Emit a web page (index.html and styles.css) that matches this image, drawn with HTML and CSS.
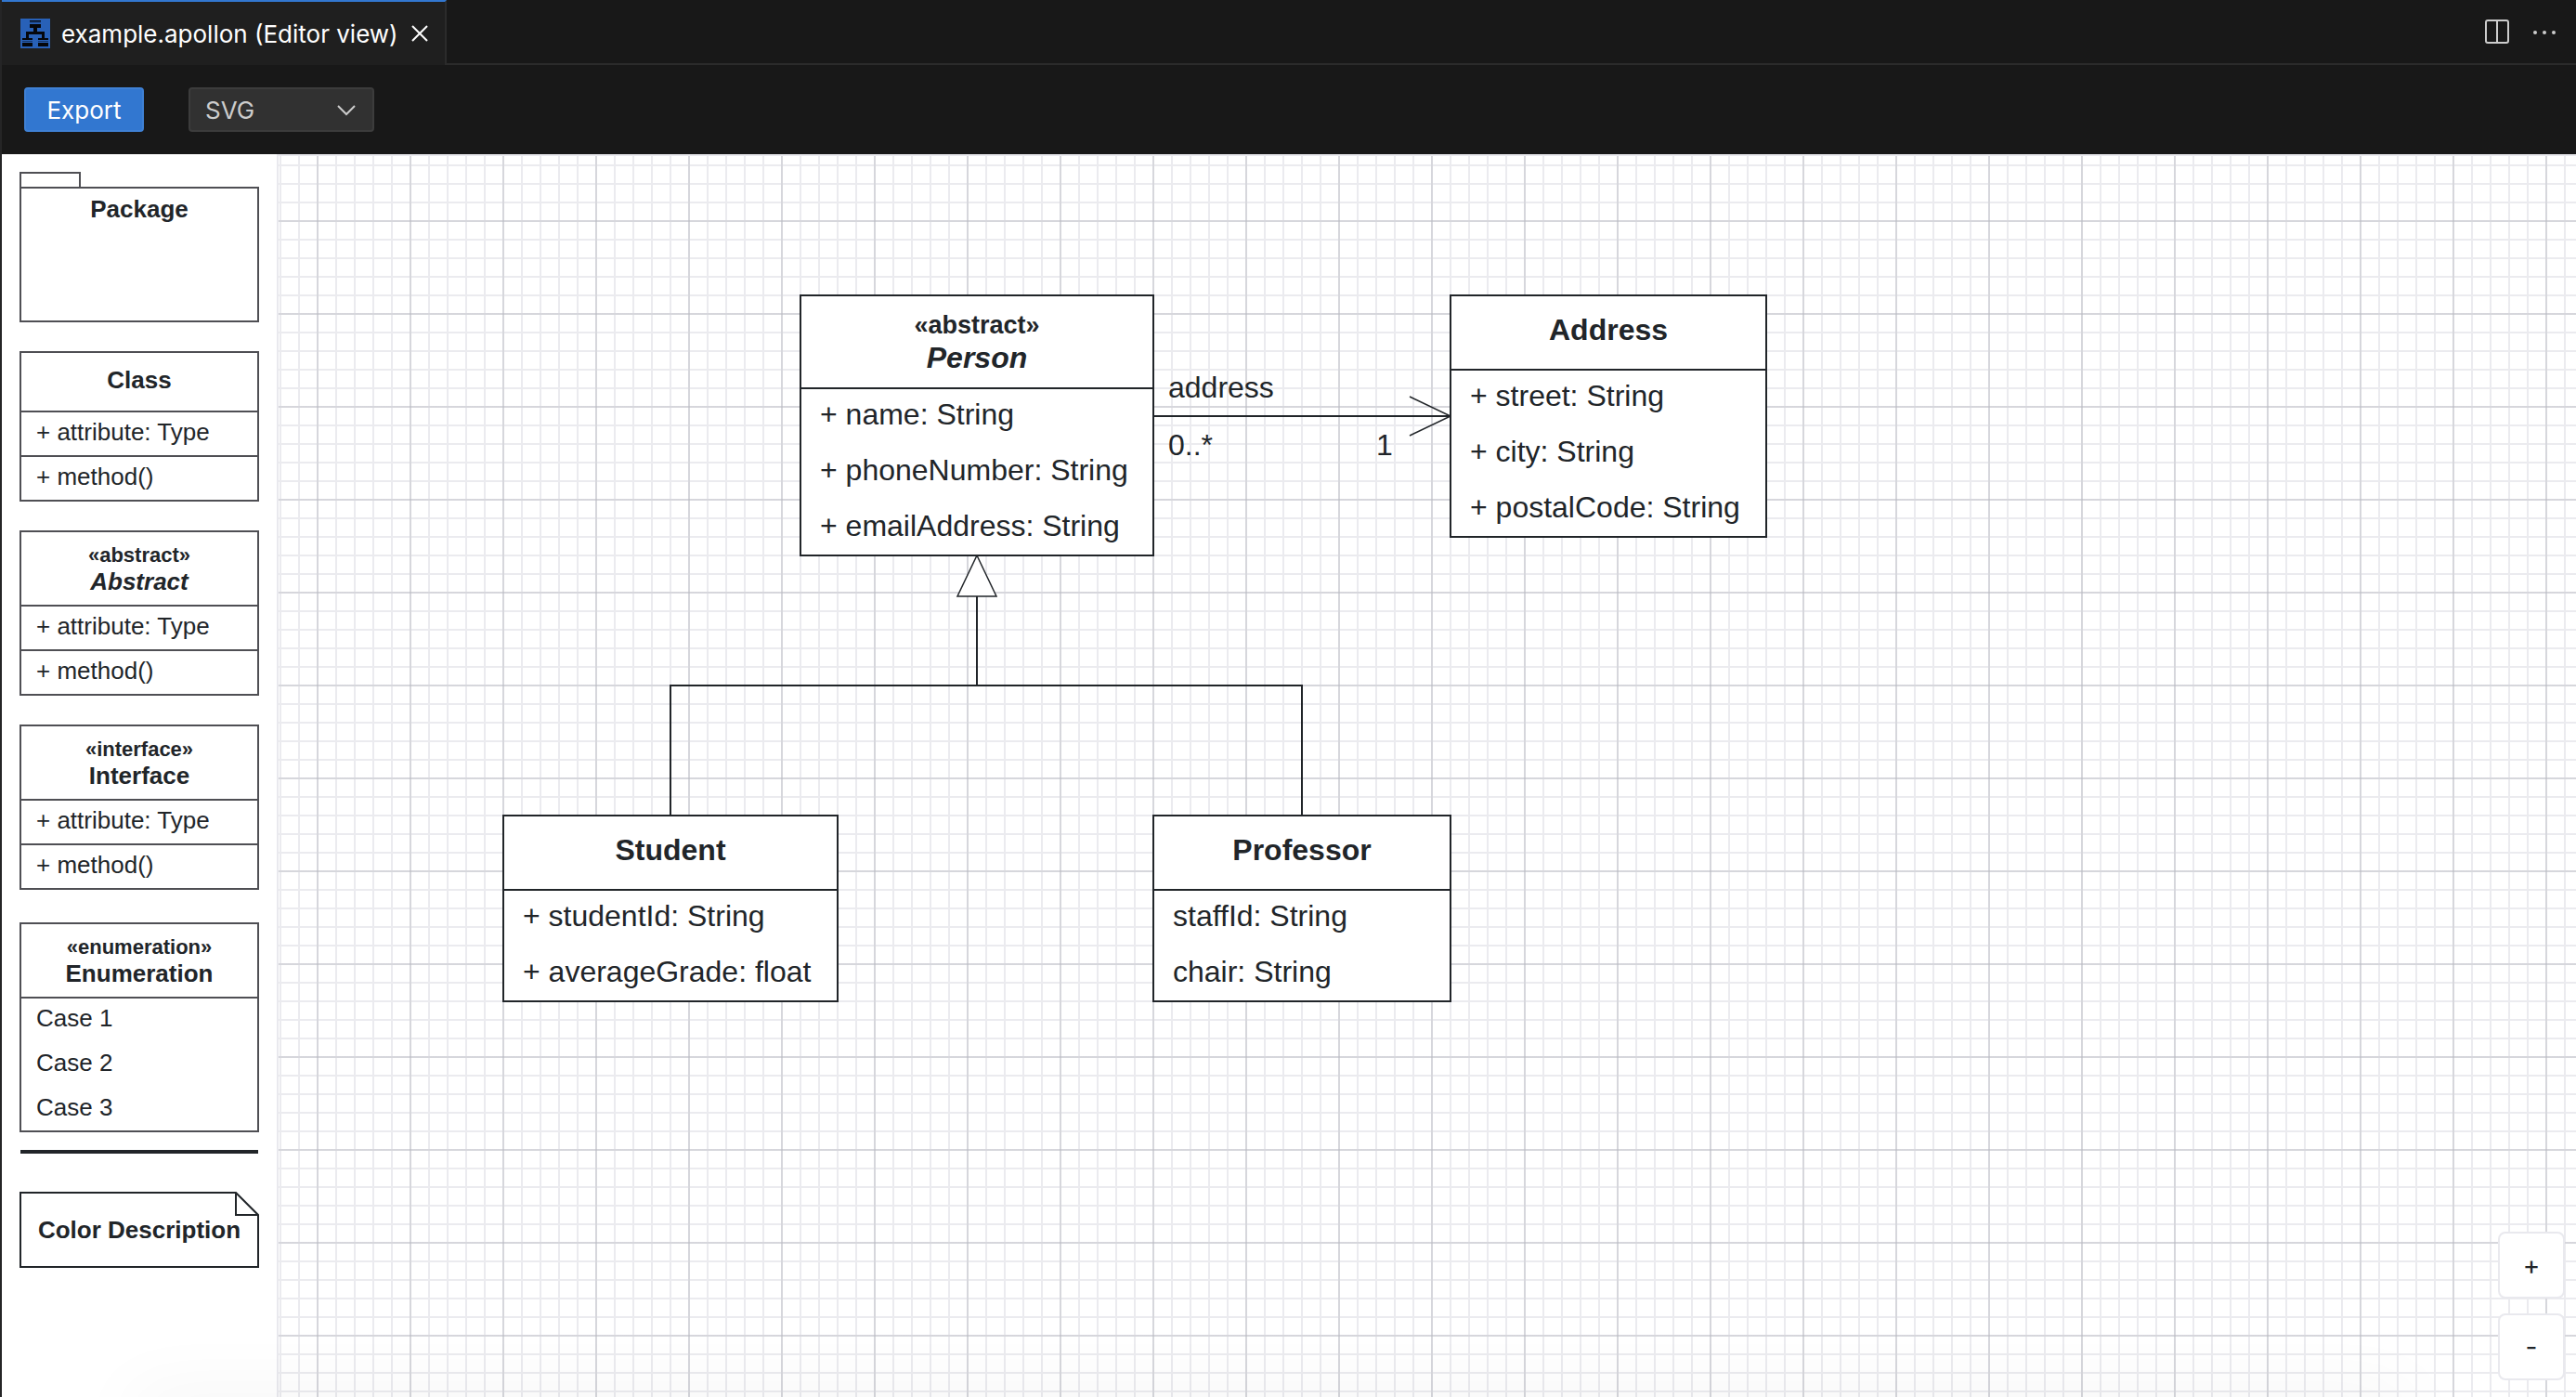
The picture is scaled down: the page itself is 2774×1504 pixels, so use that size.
FILE: index.html
```html
<!DOCTYPE html>
<html lang="en">
<head>
<meta charset="utf-8">
<title>example.apollon (Editor view)</title>
<link rel="stylesheet" href="styles.css">
</head>
<body>
<header class="tabbar">
  <div class="tab">
    <svg class="tab-icon" viewBox="0 0 32 32" aria-hidden="true">
      <rect width="32" height="32" fill="#2861b8"/>
      <path d="M10 2h12v1.500H10zM10 6h12v4h-4v4h8v7h4v2H19v-2h4v-4H9v4h4v2H2v-2h4v-7h8v-4h-4zM2 26h11v4H2zM19 26h11v4H19z" fill="#05070c"/>
      <path d="M10 4h12M2 24.500h11M19 24.500h11" stroke="#16386e" stroke-width="1"/>
    </svg>
    <span class="tab-title">example.apollon (Editor view)</span>
    <button class="icon-button" type="button" aria-label="Close">
      <svg width="18" height="18" viewBox="0 0 18 18"><path d="M1 1l16 16M17 1L1 17" stroke="#fff" stroke-width="2" fill="none"/></svg>
    </button>
  </div>
  <div class="tab-actions">
    <button class="icon-button" type="button" aria-label="Split editor">
      <svg width="26" height="26" viewBox="0 0 26 26"><path d="M3 1h20a2 2 0 0 1 2 2v20a2 2 0 0 1-2 2H3a2 2 0 0 1-2-2V3a2 2 0 0 1 2-2zM13 1v24" stroke="#ccc" stroke-width="2" fill="none"/></svg>
    </button>
    <button class="icon-button" type="button" aria-label="More actions">
      <svg width="24" height="26" viewBox="0 0 24 26" fill="#ccc"><circle cx="2" cy="14" r="2"/><circle cx="12" cy="14" r="2"/><circle cx="22" cy="14" r="2"/></svg>
    </button>
  </div>
</header>

<div class="toolbar">
  <button class="export" type="button">Export</button>
  <div class="format">
    <select aria-label="Export format"><option>SVG</option><option>PNG</option><option>JSON</option></select>
    <svg class="chevron" width="20" height="12" viewBox="0 0 20 12"><path d="M1 1l9 9 9-9" stroke="#ccc" stroke-width="2" fill="none"/></svg>
  </div>
</div>

<main class="editor">
  <aside class="palette">
    <div class="package">
      <div class="package-tab"></div>
      <div class="package-body">Package</div>
    </div>

    <div class="node">
      <div class="head">Class</div>
      <div class="section"><div class="row">+ attribute: Type</div></div>
      <div class="section"><div class="row">+ method()</div></div>
    </div>

    <div class="node">
      <div class="head typed"><small>«abstract»</small><em>Abstract</em></div>
      <div class="section"><div class="row">+ attribute: Type</div></div>
      <div class="section"><div class="row">+ method()</div></div>
    </div>

    <div class="node">
      <div class="head typed"><small>«interface»</small><span>Interface</span></div>
      <div class="section"><div class="row">+ attribute: Type</div></div>
      <div class="section"><div class="row">+ method()</div></div>
    </div>

    <div class="node enumeration">
      <div class="head typed"><small>«enumeration»</small><span>Enumeration</span></div>
      <div class="section">
        <div class="row">Case 1</div>
        <div class="row">Case 2</div>
        <div class="row">Case 3</div>
      </div>
    </div>

    <hr class="divider">

    <div class="note">
      <svg class="note-shape" viewBox="-1 -1 258 82" aria-hidden="true">
        <path d="M0 0H232L256 24V80H0zM232 0V24H256" fill="#fff" stroke="#212529" stroke-width="2"/>
      </svg>
      <span>Color Description</span>
    </div>
  </aside>

  <section class="canvas" aria-label="Diagram">
    <svg class="edges" aria-hidden="true">
      <g fill="none" stroke="#212529" stroke-width="2">
        <path d="M942 280H1262"/>
        <path d="M752 474V570M422 710V570H1102V710"/>
        <path d="M1218 259L1262 280L1218 301" stroke-width="1.500"/>
        <path d="M752 430L773 474H731z" fill="#fff" stroke-width="1.500"/>
      </g>
    </svg>

    <div class="node person">
      <div class="head typed"><small>«abstract»</small><em>Person</em></div>
      <div class="section">
        <div class="row">+ name: String</div>
        <div class="row">+ phoneNumber: String</div>
        <div class="row">+ emailAddress: String</div>
      </div>
    </div>

    <div class="node address">
      <div class="head">Address</div>
      <div class="section">
        <div class="row">+ street: String</div>
        <div class="row">+ city: String</div>
        <div class="row">+ postalCode: String</div>
      </div>
    </div>

    <div class="node student">
      <div class="head">Student</div>
      <div class="section">
        <div class="row">+ studentId: String</div>
        <div class="row">+ averageGrade: float</div>
      </div>
    </div>

    <div class="node professor">
      <div class="head">Professor</div>
      <div class="section">
        <div class="row">staffId: String</div>
        <div class="row">chair: String</div>
      </div>
    </div>

    <span class="label role">address</span>
    <span class="label source">0..*</span>
    <span class="label target">1</span>

    <div class="zoom">
      <button type="button" aria-label="Zoom in">+</button>
      <button type="button" aria-label="Zoom out">-</button>
    </div>
  </section>
</main>
</body>
</html>
```
FILE: styles.css
```css
* {
  box-sizing: border-box;
}

body {
  margin: 0;
  height: 100vh;
  display: flex;
  flex-direction: column;
  overflow: hidden;
  border-left: 2px solid #252526;
  background: #181818;
  color: #212529;
  font-family: Inter, sans-serif;
  font-size: 26px;
}

button,
select {
  font: inherit;
}

.icon-button {
  display: flex;
  padding: 0;
  border: 0;
  background: none;
}

/* Editor tabs */

.tabbar {
  display: flex;
  flex: none;
  height: 70px;
}

.tab {
  display: flex;
  align-items: center;
  padding: 0 18px 0 20px;
  border-top: 2px solid #3277d0;
  border-right: 2px solid #2b2b2b;
  background: #1f1f1f;
  color: #fff;
}

.tab-icon {
  width: 32px;
  height: 32px;
  margin-right: 12px;
}

.tab-title {
  width: 356px;
  margin-right: 21px;
  white-space: nowrap;
}

.tab-actions {
  display: flex;
  flex: 1;
  align-items: center;
  justify-content: flex-end;
  gap: 26px;
  padding-right: 22px;
  border-bottom: 2px solid #2b2b2b;
}

/* Export toolbar */

.toolbar {
  display: flex;
  flex: none;
  gap: 48px;
  height: 96px;
  padding: 24px;
}

.export {
  width: 129px;
  height: 48px;
  padding: 0;
  border: 2px solid #3f80d3;
  border-radius: 4px;
  background: #3277d0;
  color: #fff;
}

.format {
  position: relative;
  width: 200px;
  height: 48px;
}

.format select {
  width: 100%;
  height: 100%;
  padding: 0 16px;
  border: 2px solid #3c3c3c;
  border-radius: 4px;
  background: #313131;
  color: #ccc;
  appearance: none;
}

.chevron {
  position: absolute;
  top: 19px;
  right: 20px;
  pointer-events: none;
}

/* Editor */

.editor {
  position: relative;
  display: flex;
  flex: 1;
  min-height: 0;
  overflow: hidden;
  background: #fff;
  font-family: "Liberation Sans", Arial, sans-serif;
}

/* Soft shadow rising from below the window */
.editor::after {
  content: "";
  position: absolute;
  top: 100%;
  left: 140px;
  right: 180px;
  height: 40px;
  box-shadow: 0 0 80px #0000000f;
  pointer-events: none;
}

.palette {
  display: flex;
  flex: none;
  flex-direction: column;
  gap: 33px;
  width: 296px;
  padding: 20px;
  --line: #4f4f54;
}

/* UML elements: strokes are centred on the box edges */

.node {
  background: #fff;
}

.node,
.head,
.section,
.package-tab,
.package-body {
  outline: 2px solid var(--line);
  outline-offset: -1px;
}

.head {
  display: flex;
  flex-direction: column;
  align-items: center;
  justify-content: center;
  height: 64px;
  padding-bottom: 4px;
  font-weight: bold;
  line-height: 28px;
}

.head.typed {
  height: 80px;
  padding-bottom: 0;
}

.head small {
  font-size: 22px;
}

.row {
  height: 48px;
  padding: 0 17px;
  line-height: 44px;
  white-space: nowrap;
}

.package-tab {
  width: 64px;
  height: 16px;
}

.package-body {
  height: 144px;
  font-weight: bold;
  line-height: 46px;
  text-align: center;
}

.enumeration {
  margin-top: 4px;
}

.divider {
  width: 100%;
  height: 4px;
  margin: -13px 0 9px;
  border: 0;
  background: #212529;
}

.note {
  position: relative;
  height: 80px;
  font-weight: bold;
  line-height: 80px;
  text-align: center;
}

.note span {
  position: relative;
}

.note-shape {
  position: absolute;
  inset: -1px;
}

/* Diagram canvas */

.canvas {
  position: relative;
  flex: 1;
  overflow: hidden;
  border: 2px solid #e9e9ee;
  border-width: 2px 0 0 2px;
  background:
    linear-gradient(to right, #8e909a3a 2px, transparent 2px) 41px 0 / 100px 100px,
    linear-gradient(#8e909a3a 2px, transparent 2px) 0 69px / 100px 100px,
    linear-gradient(to right, #ebebef 2px, transparent 2px) 1px 0 / 20px 20px,
    linear-gradient(#ebebef 2px, transparent 2px) 0 9px / 20px 20px,
    #fff;
  font-size: 32px;
  --line: #212529;
}

.edges {
  position: absolute;
  inset: 0;
  width: 100%;
  height: 100%;
}

.canvas .node {
  position: absolute;
}

.canvas .head {
  height: 80px;
  padding-bottom: 6px;
  line-height: 36px;
}

.canvas .head.typed {
  height: 100px;
  padding-bottom: 0;
}

.canvas .head small {
  font-size: 27px;
  line-height: 34px;
}

.canvas .row {
  height: 60px;
  padding: 0 21px;
  line-height: 56px;
}

.person {
  left: 562px;
  top: 150px;
  width: 380px;
}

.address {
  left: 1262px;
  top: 150px;
  width: 340px;
}

.student {
  left: 242px;
  top: 710px;
  width: 360px;
}

.professor {
  left: 942px;
  top: 710px;
  width: 320px;
}

.label {
  position: absolute;
  line-height: 36px;
}

.role {
  left: 958px;
  top: 231px;
}

.source {
  left: 958px;
  top: 293px;
}

.target {
  left: 1182px;
  top: 293px;
}

.zoom {
  position: absolute;
  right: 12px;
  bottom: 18px;
  display: flex;
  flex-direction: column;
  gap: 16px;
}

.zoom button {
  width: 72px;
  height: 72px;
  padding: 0;
  border: 2px solid #e9e9ee;
  border-radius: 8px;
  background: #fff;
  color: #212529;
  font-family: Inter, sans-serif;
  font-size: 28px;
}
```
